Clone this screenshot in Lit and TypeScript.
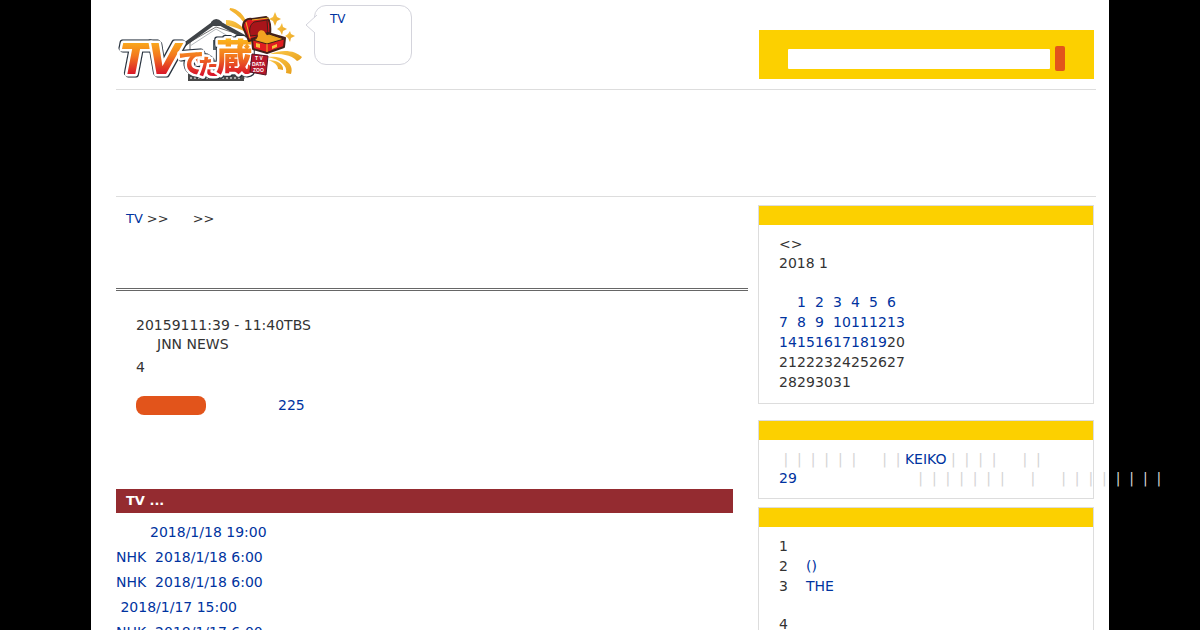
import { LitElement, html, svg, css, nothing } from "lit";
import { customElement } from "lit/decorators.js";

const NB = "\u00a0";

@customElement("site-logo")
export class SiteLogo extends LitElement {
  static styles = css`
    :host { display: block; }
    svg { display: block; }
    .word { font-family: "DejaVu Sans", sans-serif; font-weight: bold; font-style: italic; font-size: 42px; }
    .kana { font-family: "Noto Sans CJK JP", sans-serif; font-weight: 900; }
    .seal { font-family: "Liberation Sans", sans-serif; font-weight: bold; font-size: 5px; fill: #fff; }
    .letters {
      fill: url(#fire); stroke: #fff; stroke-width: 5; stroke-linejoin: round; paint-order: stroke;
      filter: drop-shadow(1px 1px 0 #26303c) drop-shadow(-1px -1px 0 #26303c);
    }
  `;

  private letters() {
    return svg`<g class="letters">
      <text class="word" x="120" y="74">T</text>
      <text class="word" x="148" y="74">V</text>
      <text class="kana" x="178" y="73" font-size="27">で</text>
      <text class="kana" x="198" y="74" font-size="21">た</text>
      <text class="kana" x="216" y="71" font-size="37">蔵</text>
    </g>`;
  }

  render() {
    return html`<svg width="190" height="80" viewBox="116 5 190 80" role="img" aria-label="TVでた蔵">
      <defs>
        <linearGradient id="fire" gradientUnits="userSpaceOnUse" x1="0" y1="40" x2="0" y2="75">
          <stop offset="0" stop-color="#fbb21c" />
          <stop offset="0.45" stop-color="#f3791f" />
          <stop offset="1" stop-color="#d8122a" />
        </linearGradient>
        <linearGradient id="gold" x1="0" y1="0" x2="1" y2="1">
          <stop offset="0" stop-color="#fbc84a" />
          <stop offset="1" stop-color="#e8a01c" />
        </linearGradient>
      </defs>
      <path d="M190 42V79H244V36L216 27Z" fill="#fff" stroke="#777" />
      <path d="M188 74H244V81H188Z" fill="#484848" />
      <path d="M190 78H242" stroke="#aaa" stroke-width="2" stroke-dasharray="2 2" />
      <path d="M184 45L214 23H219L250 40" fill="none" stroke="#404448" stroke-width="4" />
      <path d="M190 46L216 29L238 42" fill="none" stroke="#b4b8bc" />
      <path d="M211 22Q216 16 222 22V26H211Z" fill="#404448" />
      <path d="M213 40H221V50H213Z" fill="#59656d" />
      <g fill="url(#gold)">
        <path d="M230 9C239 10 244 17 247 26C243 18 238 14 230 9Z" stroke="#f4b431" stroke-width="2" />
        <path d="M226 20C236 20 242 26 247 33C241 29 234 27 226 25Z" />
        <path d="M270 54C282 49 295 50 302 57C300 60 299 60 297 61C291 54 281 54 270 54Z" />
        <path d="M267 57C282 55 295 63 291 74L286 73C288 66 280 59 267 57Z" />
        <path d="M268 60C277 60 284 64 283 70L278 69C278 65 274 62 268 60Z" />
        <path d="M275 12L277 17L281 19L277 21L275 26L273 21L269 19L273 17Z" />
        <path d="M282 23L283 27L287 29L283 31L282 35L280 31L277 29L280 27Z" />
        <path d="M290 31L291 34L295 36L291 38L290 42L288 38L285 36L288 34Z" />
      </g>
      ${this.letters()}
      <g stroke="#432018" stroke-linejoin="round">
        <path d="M243 27C243 21 247 18 252 19L266 17C270 19 271 25 270 35L249 41Z" fill="#d9181f" stroke-width="2" />
        <path d="M250 36C249 28 250 25 254 22L267 20L268 34Z" fill="#a8151a" />
        <path d="M246 22L250 38M252 20L269 18" stroke="#efb429" stroke-width="1" />
        <path d="M252 39L268 33L285 38L284 47L267 53L253 49Z" fill="#e01c20" stroke-width="2" />
        <path d="M253 40L267 44L284 39L269 34Z" fill="#e8a51e" />
        <path d="M267 44V52" stroke="#efb429" stroke-width="1" />
      </g>
      <path d="M258 36C257 32 260 29 264 31L268 37L278 39L267 42L256 40Z" fill="#f4a321" />
      <path d="M256 43L260 44V48L256 47ZM272 46L277 44V47L272 49Z" fill="#f6c33a" />
      <path d="M252 54L268 56L266 75L250 72Z" fill="#b5172b" stroke="#531522" />
      <text class="seal" x="255" y="60">T V</text>
      <text class="seal" x="252" y="66">DATA</text>
      <text class="seal" x="253" y="72">ZOO</text>
    </svg>`;
  }
}

@customElement("side-panel")
export class SidePanel extends LitElement {
  static styles = css`
    :host { display: block; border: 1px solid #ddd; }
    .cap { height: 19px; background: #fcd000; }
    .body { padding: 10px 20px; }
  `;
  render() {
    return html`<div class="cap"></div><div class="body"><slot></slot></div>`;
  }
}

@customElement("app-root")
export class AppRoot extends LitElement {
  static styles = css`
    :host {
      display: block; height: 100vh; overflow: hidden; background: #000; color: #333;
      font: 14px/19px "DejaVu Sans", sans-serif;
    }
    * { box-sizing: border-box; }
    a { color: #0033a0; text-decoration: none; }
    .page { max-width: 1018px; min-height: 100%; margin: 0 auto; padding: 0 13px 0 25px; background: #fff; }
    header { display: flex; align-items: flex-start; height: 90px; padding: 5px 2px 0 0; border-bottom: 1px solid #ddd; }
    .bubble {
      position: relative; width: 98px; height: 60px; margin-left: 8px; padding: 4px 15px;
      border: 1px solid #d4d4dc; border-radius: 12px; font-size: 12px;
    }
    .tail { position: absolute; left: -10px; top: 8px; }
    .search {
      display: flex; align-items: center; gap: 5px; width: 335px; height: 49px;
      margin: 25px 0 0 auto; padding: 8px 29px 0; background: #fcd000;
    }
    .search input { flex: 1; min-width: 0; height: 20px; border: 0; border-radius: 1px; padding: 0 4px; background: #fff; font: inherit; }
    .search button { width: 10px; height: 25px; border: 0; border-radius: 2px; padding: 0; background: #e2541b; }
    .banner { height: 107px; border-bottom: 1px solid #ddd; }
    .cols { display: flex; align-items: flex-start; gap: 10px; }
    main { flex: 1; min-width: 0; }
    aside { width: 338px; padding: 8px 2px 0 0; }
    .crumbs { display: flex; gap: 4px; height: 91px; padding: 12px 10px; font-size: 13px; }
    .crumbs .next { margin-left: 20px; }
    h1 { margin: 0; border-bottom: 3px double #666; }
    .program { padding: 25px 20px 0; }
    .program p { margin: 0; }
    .program .title { padding-left: 21px; }
    .program .count { padding-top: 4px; }
    .tags { display: flex; align-items: center; gap: 72px; padding-top: 19px; }
    .pill { width: 70px; height: 19px; border: 0; border-radius: 8px; background: #e2541b; }
    h2 { margin: 74px 15px 7px 0; padding: 0 10px; background: #942b30; color: #fff; font-size: 13px; line-height: 24px; }
    ul { list-style: none; margin: 0; padding: 0; line-height: 25px; }
    .indent { padding-left: 34px; }
    table { border-collapse: collapse; }
    td, th { width: 18px; height: 20px; padding: 0; line-height: 20px; text-align: left; white-space: nowrap; }
    th { height: 19px; line-height: 19px; }
    .month { padding-bottom: 1px; margin-bottom: 16px; }
    .words { margin-bottom: 8px; white-space: nowrap; color: #d4d4d4; }
    .words .blank { display: inline-block; width: 17px; }
    .words .wide { display: inline-block; width: 117px; }
    .rank { display: grid; grid-template-columns: 27px 1fr; min-height: 20px; }
    .tall { min-height: 38px; }
  `;

  private bars(n: number) {
    return (NB + "|" + NB).repeat(n);
  }

  private calendar() {
    const rows = [0, 1, 2, 3, 4].map((w) => [0, 1, 2, 3, 4, 5, 6].map((d) => w * 7 + d));
    return html`<table aria-label="2018 1">
      <tr>${rows[0].map(() => html`<th></th>`)}</tr>
      ${rows.map((r) => html`<tr>${r.map((n) => html`<td>${
        n < 1 || n > 31 ? nothing : n < 20 ? html`<a href="#">${n}</a>` : n
      }</td>`)}</tr>`)}
    </table>`;
  }

  render() {
    const news = [
      { text: "2018/1/18 19:00", indent: true },
      { text: `NHK${NB}${NB}2018/1/18 6:00` },
      { text: `NHK${NB}${NB}2018/1/18 6:00` },
      { text: `${NB}2018/1/17 15:00` },
      { text: `NHK${NB}${NB}2018/1/17 6:00` },
    ];
    const ranks = ["", "()", "THE", ""];
    return html`<div class="page">
      <header>
        <a href="#"><site-logo></site-logo></a>
        <div class="bubble">
          <svg class="tail" width="12" height="20" viewBox="0 0 12 20" aria-hidden="true">
            <path d="M12 1L1 11L10 19" fill="#fff" stroke="#d4d4dc" />
          </svg>
          <a href="#">TV</a>
        </div>
        <form class="search" role="search">
          <input type="text" aria-label="Search" />
          <button type="button" aria-label="Search"></button>
        </form>
      </header>
      <div class="banner"></div>
      <div class="cols">
        <main>
          <nav class="crumbs"><a href="#">TV</a><span>&gt;&gt;</span><span class="next">&gt;&gt;</span></nav>
          <h1></h1>
          <section class="program">
            <p>20159111:39 - 11:40TBS</p>
            <p class="title">JNN NEWS</p>
            <p class="count">4</p>
            <div class="tags"><button class="pill" type="button" aria-label="Tags"></button><a href="#">225</a></div>
          </section>
          <h2>TV ...</h2>
          <ul>${news.map((n) => html`<li class=${n.indent ? "indent" : ""}><a href="#">${n.text}</a></li>`)}</ul>
        </main>
        <aside>
          <side-panel class="month">
            <div>&lt;&gt;</div>
            <div>2018 1</div>
            ${this.calendar()}
          </side-panel>
          <side-panel class="words">
            <div>${this.bars(6)}<span class="blank"></span>${this.bars(2)}<a href="#">KEIKO</a>${this.bars(4)}<span class="blank"></span>${this.bars(2)}</div>
            <div><a href="#">29</a><span class="wide"></span>${this.bars(7)}<span class="blank"></span>${this.bars(1)}<span class="blank"></span>${this.bars(8)}</div>
          </side-panel>
          <side-panel>
            ${ranks.map((t, i) => html`<div class="rank ${i === 2 ? "tall" : ""}"><span>${i + 1}</span>${t ? html`<a href="#">${t}</a>` : nothing}</div>`)}
          </side-panel>
        </aside>
      </div>
    </div>`;
  }
}
